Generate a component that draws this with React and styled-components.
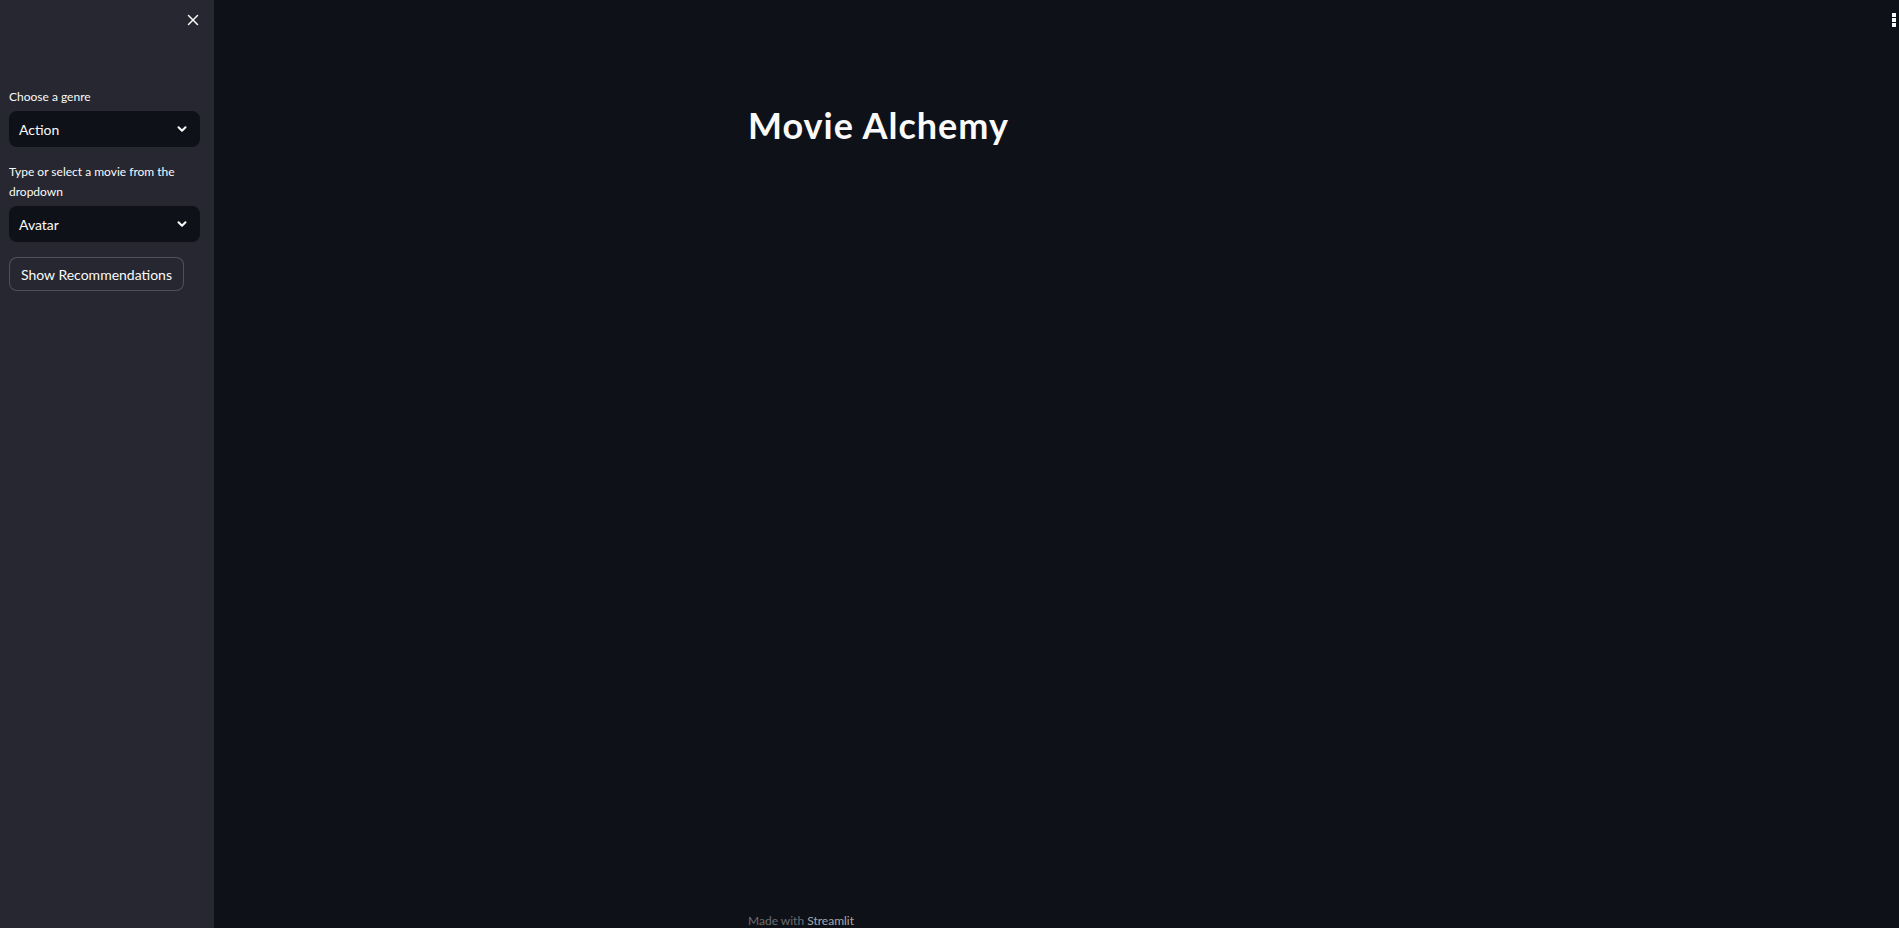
import React from 'react';
import styled, { createGlobalStyle } from 'styled-components';

const GlobalStyle = createGlobalStyle`
  html, body {
    margin: 0;
    padding: 0;
    background: #0e1117;
  }
  body {
    font-family: Lato, "Open Sans", sans-serif;
    color: #fafafa;
  }
  * {
    box-sizing: border-box;
  }
`;

const Page = styled.div`
  display: flex;
  flex-direction: row;
  width: 100%;
  height: 928px;
  overflow: hidden;
`;

const Sidebar = styled.aside`
  display: flex;
  flex-direction: column;
  width: 214px;
  flex-shrink: 0;
  background-color: #262730;
  padding: 0 14px 0 9px;
`;

const SidebarHeader = styled.div`
  display: flex;
  justify-content: flex-end;
  align-items: center;
  height: 40px;
  margin-right: -1px;
`;

const CloseButton = styled.button`
  display: flex;
  align-items: center;
  justify-content: center;
  width: 16px;
  height: 16px;
  padding: 0;
  border: none;
  background: transparent;
  color: #fafafa;
  cursor: pointer;
`;

const Form = styled.div`
  display: flex;
  flex-direction: column;
  padding-top: 47px;
`;

const Label = styled.label`
  display: block;
  font-size: 12px;
  line-height: 20px;
  color: #fafafa;
  margin-bottom: 4px;
`;

const Field = styled.div`
  margin-bottom: ${(props) => props.gap || '15px'};
`;

const Select = styled.div`
  display: flex;
  align-items: center;
  justify-content: space-between;
  height: 36px;
  padding: 0 11px 0 10px;
  border-radius: 8px;
  background-color: #0e1117;
  font-size: 14px;
  color: #fafafa;
`;

const Button = styled.button`
  align-self: flex-start;
  height: 34px;
  padding: 0 11px;
  border: 1px solid rgba(250, 250, 250, 0.2);
  border-radius: 8px;
  background-color: #262730;
  color: #fafafa;
  font-family: inherit;
  font-size: 14px;
  cursor: pointer;
`;

const Main = styled.main`
  display: flex;
  flex-direction: column;
  flex: 1;
  background-color: #0e1117;
`;

const TopBar = styled.div`
  display: flex;
  justify-content: flex-end;
  height: 40px;
  padding: 13px 3px 0 0;
`;

const Kebab = styled.div`
  display: flex;
  flex-direction: column;
  gap: 1px;

  span {
    width: 4px;
    height: 4px;
    background: #fafafa;
  }
`;

const Block = styled.div`
  width: 617px;
  margin: 0 auto;
  flex: 1;
  padding-top: 64px;
`;

const Title = styled.h1`
  margin: 0;
  font-size: 36px;
  font-weight: 700;
  line-height: 1.2;
  letter-spacing: 1px;
  color: #fafafa;
`;

const Footer = styled.footer`
  width: 617px;
  margin: 0 auto;
  height: 15px;
  font-size: 12px;
  line-height: 16px;
  color: rgba(250, 250, 250, 0.4);

  b {
    font-weight: 400;
    color: rgba(250, 250, 250, 0.65);
  }
`;

const Chevron = () => (
  <svg width='14' height='14' viewBox='0 0 24 24' fill='none' stroke='currentColor' strokeWidth='3.5' strokeLinecap='round' strokeLinejoin='round'>
    <polyline points='6 9 12 15 18 9' />
  </svg>
);

export default function App() {
  return (
    <Page>
      <GlobalStyle />
      <Sidebar>
        <SidebarHeader>
          <CloseButton aria-label='Close sidebar'>
            <svg width='12' height='12' viewBox='0 0 12 12' stroke='currentColor' strokeWidth='1.5' strokeLinecap='round'>
              <line x1='1.5' y1='1.5' x2='10.5' y2='10.5' />
              <line x1='10.5' y1='1.5' x2='1.5' y2='10.5' />
            </svg>
          </CloseButton>
        </SidebarHeader>
        <Form>
          <Field>
            <Label>Choose a genre</Label>
            <Select>
              <span>Action</span>
              <Chevron />
            </Select>
          </Field>
          <Field>
            <Label>Type or select a movie from the dropdown</Label>
            <Select>
              <span>Avatar</span>
              <Chevron />
            </Select>
          </Field>
          <Button>Show Recommendations</Button>
        </Form>
      </Sidebar>
      <Main>
        <TopBar>
          <Kebab>
            <span />
            <span />
            <span />
          </Kebab>
        </TopBar>
        <Block>
          <Title>Movie Alchemy</Title>
        </Block>
        <Footer>
          Made with <b>Streamlit</b>
        </Footer>
      </Main>
    </Page>
  );
}
